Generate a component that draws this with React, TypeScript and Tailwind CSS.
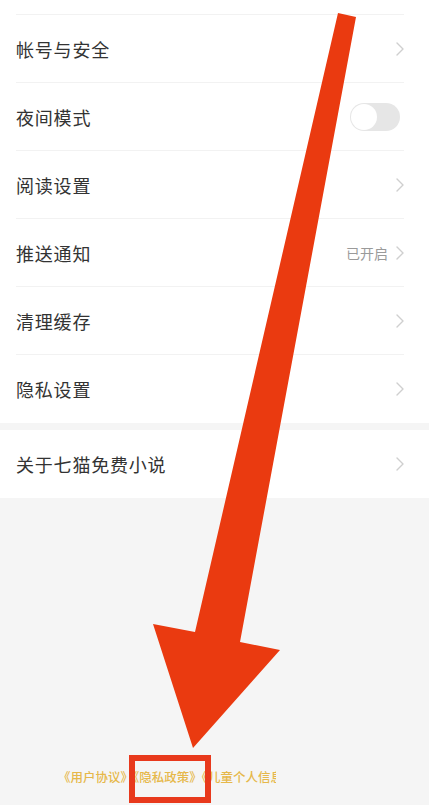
import React from 'react';

const font = { fontFamily: '"Noto Sans CJK SC", "Noto Sans", sans-serif' };

function Chevron() {
  return (
    <svg width="8" height="14" viewBox="0 0 8 14" fill="none" className="shrink-0">
      <path d="M1 1l6 6-6 6" stroke="#cfcfcf" strokeWidth="1.4" strokeLinecap="round" strokeLinejoin="round" />
    </svg>
  );
}

function Row({ label, right, last }: { label: string; right?: React.ReactNode; last?: boolean }) {
  return (
    <div className="h-[68px] ml-4 mr-[25px] flex items-center justify-between relative">
      <span className="text-[18px] text-[#333333] tracking-[0.8px]">{label}</span>
      {right ?? <Chevron />}
      {!last && <div className="absolute left-0 right-0 bottom-0 h-px bg-[#f2f2f2]" />}
    </div>
  );
}

function Toggle() {
  return (
    <div className="w-[50px] h-[28px] rounded-full bg-[#e6e6e6] flex items-center px-[1px] mr-[4px]">
      <div className="w-[26px] h-[26px] rounded-full bg-white" />
    </div>
  );
}

export default function App() {
  return (
    <div className="relative w-[429px] h-[805px] overflow-hidden bg-[#f5f5f5]" style={font}>
      <div className="bg-white">
        <div className="h-[15px] ml-4 mr-[25px] border-b border-[#f2f2f2]" />
        <Row label="帐号与安全" />
        <Row label="夜间模式" right={<Toggle />} />
        <Row label="阅读设置" />
        <Row
          label="推送通知"
          right={
            <div className="flex items-center gap-[8px]">
              <span className="text-[14px] text-[#9a9a9a]">已开启</span>
              <Chevron />
            </div>
          }
        />
        <Row label="清理缓存" />
        <Row label="隐私设置" last />
      </div>

      <div className="h-[7px]" />

      <div className="bg-white">
        <Row label="关于七猫免费小说" last />
      </div>

      <div className="pt-[270px] pl-[58px]">
        <div className="w-[218px] overflow-hidden whitespace-nowrap text-[12.5px] leading-[18px] font-medium text-[#e6b84a]">
          《用户协议》《隐私政策》《儿童个人信息保护规则》
        </div>
      </div>

      {/* annotation arrow */}
      <svg className="absolute inset-0 pointer-events-none" width="429" height="805" viewBox="0 0 429 805">
        <polygon
          points="338,13 356,17 240,642 280,650 193,748 153,624 195,632"
          fill="#ea3a10"
        />
      </svg>

      {/* highlight box */}
      <div className="absolute left-[129px] top-[755px] w-[82px] h-[48px] border-[6px] border-[#e8391c]" />
    </div>
  );
}
